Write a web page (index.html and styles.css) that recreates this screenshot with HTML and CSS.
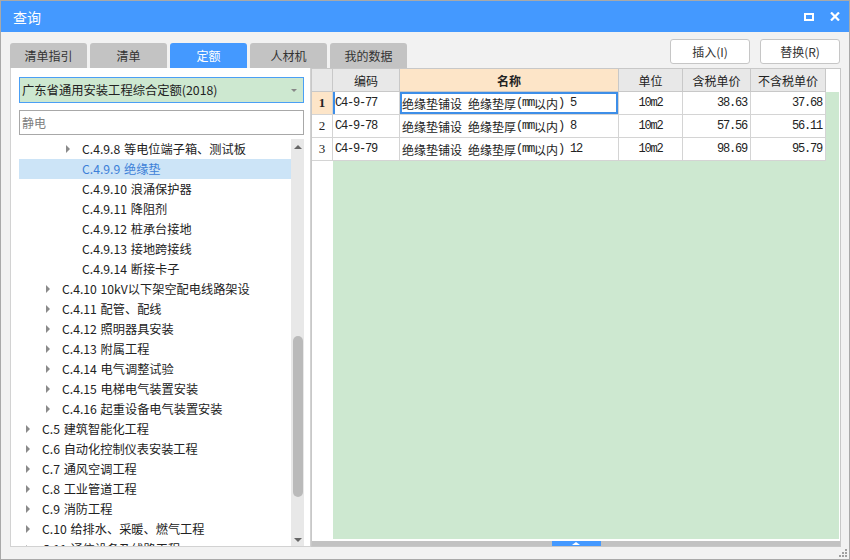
FILE: index.html
```html
<!DOCTYPE html>
<html lang="zh-CN">
<head>
<meta charset="utf-8">
<title>查询</title>
<link rel="stylesheet" href="styles.css">
</head>
<body>
<div class="window">
  <div class="titlebar">
    <span class="title">查询</span>
    <span class="tb-icons">
      <span class="ico-max"></span>
      <svg class="ico-close" width="10" height="9" viewBox="0 0 10 9"><path d="M1 0.5 L9 8.5 M9 0.5 L1 8.5" stroke="#fff" stroke-width="2.2" fill="none"/></svg>
    </span>
  </div>
  <div class="toolbar">
    <div class="tabs">
      <div class="tab">清单指引</div>
      <div class="tab">清单</div>
      <div class="tab active">定额</div>
      <div class="tab">人材机</div>
      <div class="tab">我的数据</div>
    </div>
    <div class="buttons">
      <div class="btn">插入(I)</div>
      <div class="btn">替换(R)</div>
    </div>
  </div>
  <div class="main">
    <div class="left">
      <div class="select"><span>广东省通用安装工程综合定额(2018)</span><span class="caret"></span></div>
      <div class="search">静电</div>
      <div class="treewrap">
        <div class="tree">
          <div class="row l3"><span class="tw"><i></i></span>C.4.9.8 等电位端子箱、测试板</div>
          <div class="row l3 sel"><span class="tw"></span>C.4.9.9 绝缘垫</div>
          <div class="row l3"><span class="tw"></span>C.4.9.10 浪涌保护器</div>
          <div class="row l3"><span class="tw"></span>C.4.9.11 降阻剂</div>
          <div class="row l3"><span class="tw"></span>C.4.9.12 桩承台接地</div>
          <div class="row l3"><span class="tw"></span>C.4.9.13 接地跨接线</div>
          <div class="row l3"><span class="tw"></span>C.4.9.14 断接卡子</div>
          <div class="row l2"><span class="tw"><i></i></span>C.4.10 10kV以下架空配电线路架设</div>
          <div class="row l2"><span class="tw"><i></i></span>C.4.11 配管、配线</div>
          <div class="row l2"><span class="tw"><i></i></span>C.4.12 照明器具安装</div>
          <div class="row l2"><span class="tw"><i></i></span>C.4.13 附属工程</div>
          <div class="row l2"><span class="tw"><i></i></span>C.4.14 电气调整试验</div>
          <div class="row l2"><span class="tw"><i></i></span>C.4.15 电梯电气装置安装</div>
          <div class="row l2"><span class="tw"><i></i></span>C.4.16 起重设备电气装置安装</div>
          <div class="row l1"><span class="tw"><i></i></span>C.5 建筑智能化工程</div>
          <div class="row l1"><span class="tw"><i></i></span>C.6 自动化控制仪表安装工程</div>
          <div class="row l1"><span class="tw"><i></i></span>C.7 通风空调工程</div>
          <div class="row l1"><span class="tw"><i></i></span>C.8 工业管道工程</div>
          <div class="row l1"><span class="tw"><i></i></span>C.9 消防工程</div>
          <div class="row l1"><span class="tw"><i></i></span>C.10 给排水、采暖、燃气工程</div>
          <div class="row l1"><span class="tw"><i></i></span>C.11 通信设备及线路工程</div>
        </div>
        <div class="vscroll">
          <span class="up"></span>
          <span class="thumb"></span>
          <span class="down"></span>
        </div>
      </div>
    </div>
    <div class="right">
      <div class="ghead">
        <div class="c cn">&nbsp;</div>
        <div class="c cc">编码</div>
        <div class="c cm hl">名称</div>
        <div class="c cu">单位</div>
        <div class="c cp">含税单价</div>
        <div class="c cq">不含税单价</div>
      </div>
      <div class="gbody">
        <div class="grow">
          <div class="c cn cur">1</div>
          <div class="c cc mono curl">C4-9-77</div>
          <div class="c cm curc">绝缘垫铺设<span class="a"> </span>绝缘垫厚<span class="a">(mm</span>以内<span class="a">) 5</span></div>
          <div class="c cu mono">10m2</div>
          <div class="c cp mono">38.63</div>
          <div class="c cq mono">37.68</div>
        </div>
        <div class="grow">
          <div class="c cn">2</div>
          <div class="c cc mono">C4-9-78</div>
          <div class="c cm">绝缘垫铺设<span class="a"> </span>绝缘垫厚<span class="a">(mm</span>以内<span class="a">) 8</span></div>
          <div class="c cu mono">10m2</div>
          <div class="c cp mono">57.56</div>
          <div class="c cq mono">56.11</div>
        </div>
        <div class="grow">
          <div class="c cn">3</div>
          <div class="c cc mono">C4-9-79</div>
          <div class="c cm">绝缘垫铺设<span class="a"> </span>绝缘垫厚<span class="a">(mm</span>以内<span class="a">) 12</span></div>
          <div class="c cu mono">10m2</div>
          <div class="c cp mono">98.69</div>
          <div class="c cq mono">95.79</div>
        </div>
      </div>
      <div class="splitter"><span class="handle"><i></i></span></div>
    </div>
  </div>
  <svg class="grip" width="10" height="10" viewBox="0 0 10 10" fill="#a0a0a0">
    <rect x="7" y="1" width="2" height="2"/>
    <rect x="4" y="4" width="2" height="2"/><rect x="7" y="4" width="2" height="2"/>
    <rect x="1" y="7" width="2" height="2"/><rect x="4" y="7" width="2" height="2"/><rect x="7" y="7" width="2" height="2"/>
  </svg>
</div>
</body>
</html>
```
FILE: styles.css
```css
* { box-sizing: border-box; }
html, body { margin: 0; padding: 0; }
body {
  font-family: "Noto Sans CJK SC", "Noto Sans", sans-serif;
  font-size: 12px;
  color: #222;
  background: #fff;
}
.window {
  position: relative;
  width: 850px;
  height: 560px;
  border: 1px solid #a9a9a9;
  background: #f2f2f2;
  display: flex;
  flex-direction: column;
}
.titlebar {
  height: 31px;
  flex: none;
  background: #4499ff;
  color: #fff;
  display: flex;
  align-items: center;
  justify-content: space-between;
  padding: 0 9px 0 12px;
}
.title { font-size: 14px; line-height: 16px; }
.tb-icons { display: flex; align-items: center; gap: 16px; }
.ico-max {
  display: block;
  width: 10px;
  height: 8px;
  border: 2px solid #fff;
}
.ico-close { display: block; }
.toolbar {
  height: 36px;
  flex: none;
  display: flex;
  justify-content: space-between;
  padding: 0 9px;
}
.tabs { display: flex; align-items: flex-end; gap: 3px; }
.tab {
  width: 77px;
  height: 25px;
  background: #c3c3c3;
  border-radius: 3px 3px 0 0;
  display: flex;
  align-items: center;
  justify-content: center;
  color: #333;
  font-size: 12px;
}
.tab.active { background: #4499ff; color: #fff; }
.buttons { display: flex; gap: 10px; padding-top: 7px; }
.btn {
  width: 80px;
  height: 25px;
  background: #fff;
  border: 1px solid #c6c6c6;
  border-radius: 3px;
  display: flex;
  align-items: center;
  justify-content: center;
  color: #333;
}
.main {
  height: 479px;
  flex: none;
  display: flex;
  padding: 0 8px 0 9px;
}
.left {
  width: 301px;
  flex: none;
  background: #fff;
  border: 1px solid #d2d2d2;
  border-top: none;
  padding: 9px 6px 0 8px;
  display: flex;
  flex-direction: column;
}
.select {
  height: 26px;
  flex: none;
  background: #cde8d0;
  border: 1px solid #4a9ff5;
  display: flex;
  align-items: center;
  justify-content: space-between;
  padding: 0 6px 0 2px;
  color: #222;
  font-size: 12.3px;
}
.caret {
  width: 0; height: 0;
  border-left: 3px solid transparent;
  border-right: 3px solid transparent;
  border-top: 3px solid #888;
}
.search {
  height: 25px;
  flex: none;
  margin-top: 7px;
  border: 1px solid #a8a8a8;
  display: flex;
  align-items: center;
  padding-left: 2px;
  color: #808080;
}
.treewrap {
  flex: 1;
  min-height: 0;
  margin-top: 4px;
  display: flex;
  overflow: hidden;
}
.tree { flex: 1; overflow: hidden; }
.row {
  height: 20px;
  display: flex;
  align-items: center;
  white-space: pre;
  color: #222;
  font-size: 12.2px;
  word-spacing: 1px;
}
.row.l1 { padding-left: 7px; }
.row.l2 { padding-left: 27px; }
.row.l3 { padding-left: 47px; }
.row.sel { background: #cce4f7; color: #3d80d8; }
.tw { width: 16px; flex: none; display: flex; align-items: center; }
.tw i {
  display: block;
  width: 0; height: 0;
  border-left: 4px solid #8a8a8a;
  border-top: 4px solid transparent;
  border-bottom: 4px solid transparent;
}
.vscroll {
  width: 13px;
  flex: none;
  background: #e8e8e8;
  position: relative;
}
.vscroll .up, .vscroll .down {
  position: absolute;
  left: 3px;
  width: 0; height: 0;
  border-left: 4px solid transparent;
  border-right: 4px solid transparent;
}
.vscroll .up { top: 6px; border-bottom: 4px solid #666; }
.vscroll .down { bottom: 4px; border-top: 4px solid #666; }
.vscroll .thumb {
  position: absolute;
  left: 2px;
  top: 197px;
  width: 10px;
  height: 161px;
  border-radius: 5px;
  background: #bababa;
}
.right {
  flex: 1;
  background: #fff;
  border: 1px solid #c8c8c8;
  display: flex;
  flex-direction: column;
}
.ghead {
  height: 23px;
  flex: none;
  display: flex;
  background: #fff;
}
.ghead .c {
  background: #e8e8e8;
  border-right: 1px solid #c8c8c8;
  border-bottom: 1px solid #c8c8c8;
  justify-content: center;
  color: #222;
}
.ghead .c.hl { background: #fde5c8; font-weight: bold; }
.c {
  height: 23px;
  flex: none;
  display: flex;
  align-items: center;
  white-space: nowrap;
  border-right: 1px solid #d4d4d4;
  border-bottom: 1px solid #d4d4d4;
  background: #fff;
  padding: 0 2px;
}
.cn { width: 21px; justify-content: center; font-family: "Liberation Serif", serif; font-size: 13px; }
.cc { width: 67px; }
.cm { width: 219px; }
.cu { width: 64px; justify-content: center; }
.cp { width: 68px; justify-content: flex-end; }
.cq { width: 75px; justify-content: flex-end; }
.mono, .a {
  font-family: "Liberation Mono", monospace;
  font-size: 12px;
  letter-spacing: -1.2px;
}
.cp.mono, .cq.mono { padding-right: 3px; }
.a { white-space: pre; }
.gbody {
  flex: 1;
  margin-right: 1px;
  background: linear-gradient(to right, #fff 21px, #cde8d0 21px);
}
.grow { display: flex; }
.cn.cur { background: #fde5c8; font-weight: bold; }
.curl { box-shadow: inset 2px 0 0 #3d8ee8; }
.curc { box-shadow: inset 0 0 0 2px #3d8ee8; }
.splitter {
  height: 5px;
  flex: none;
  margin-top: 2px;
  background: #c2c2c2;
  display: flex;
  justify-content: center;
}
.handle {
  width: 49px;
  height: 5px;
  background: #4499ff;
  display: flex;
  justify-content: center;
  align-items: center;
}
.handle i {
  display: block;
  width: 0; height: 0;
  border-left: 4px solid transparent;
  border-right: 4px solid transparent;
  border-bottom: 3px solid #fff;
}
.grip { position: absolute; right: 1px; bottom: 1px; }
```
